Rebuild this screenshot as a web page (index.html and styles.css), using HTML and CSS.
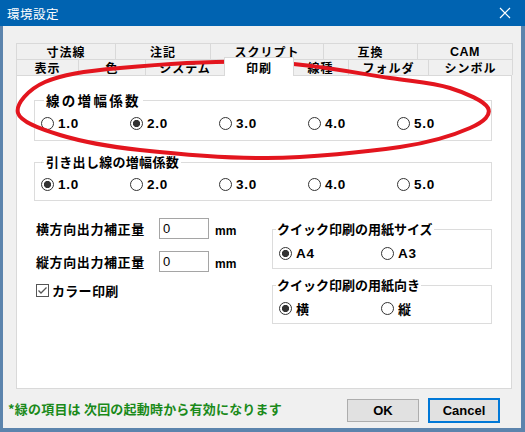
FILE: index.html
```html
<!DOCTYPE html>
<html lang="ja">
<head>
<meta charset="utf-8">
<title>環境設定</title>
<link rel="stylesheet" href="styles.css">
</head>
<body>
<div class="window">
  <div class="titlebar">
    <span class="title">環境設定</span>
    <svg class="close" width="12" height="12" viewBox="0 0 12 12"><path d="M1 1L11 11M11 1L1 11" stroke="#fff" stroke-width="1.2" fill="none"/></svg>
  </div>
  <div class="body">
    <div class="tabs">
      <div class="tabrow row1">
        <div class="tab">寸法線</div>
        <div class="tab">注記</div>
        <div class="tab">スクリプト</div>
        <div class="tab">互換</div>
        <div class="tab latin">CAM</div>
      </div>
      <div class="tabrow row2">
        <div class="tab">表示</div>
        <div class="tab">色</div>
        <div class="tab">システム</div>
        <div class="tab selected">印刷</div>
        <div class="tab">線種</div>
        <div class="tab">フォルダ</div>
        <div class="tab">シンボル</div>
      </div>
      <div class="panel">
        <div class="group wide g1">
          <div class="legend spaced">線の増幅係数</div>
          <div class="radios five">
            <label class="opt"><span class="radio"></span><span class="num">1.0</span></label>
            <label class="opt"><span class="radio on"></span><span class="num">2.0</span></label>
            <label class="opt"><span class="radio"></span><span class="num">3.0</span></label>
            <label class="opt"><span class="radio"></span><span class="num">4.0</span></label>
            <label class="opt"><span class="radio"></span><span class="num">5.0</span></label>
          </div>
        </div>
        <div class="group wide g2">
          <div class="legend">引き出し線の増幅係数</div>
          <div class="radios five">
            <label class="opt"><span class="radio on"></span><span class="num">1.0</span></label>
            <label class="opt"><span class="radio"></span><span class="num">2.0</span></label>
            <label class="opt"><span class="radio"></span><span class="num">3.0</span></label>
            <label class="opt"><span class="radio"></span><span class="num">4.0</span></label>
            <label class="opt"><span class="radio"></span><span class="num">5.0</span></label>
          </div>
        </div>
        <div class="lower">
          <div class="leftcol">
            <div class="field">
              <span class="flabel">横方向出力補正量</span>
              <span class="input">0</span>
              <span class="unit">mm</span>
            </div>
            <div class="field">
              <span class="flabel">縦方向出力補正量</span>
              <span class="input">0</span>
              <span class="unit">mm</span>
            </div>
            <label class="check">
              <svg class="box" width="13" height="13" viewBox="0 0 13 13"><rect x="0.5" y="0.5" width="12" height="12" fill="#fff" stroke="#555"/><path d="M2.5 6.5L5 9L10.5 3.5" stroke="#555" stroke-width="1.3" fill="none"/></svg>
              <span>カラー印刷</span>
            </label>
          </div>
          <div class="rightcol">
            <div class="group small ga">
              <div class="legend">クイック印刷の用紙サイズ</div>
              <div class="radios two">
                <label class="opt"><span class="radio on"></span><span class="num">A4</span></label>
                <label class="opt"><span class="radio"></span><span class="num">A3</span></label>
              </div>
            </div>
            <div class="group small gb">
              <div class="legend">クイック印刷の用紙向き</div>
              <div class="radios two">
                <label class="opt"><span class="radio on"></span><span>横</span></label>
                <label class="opt"><span class="radio"></span><span>縦</span></label>
              </div>
            </div>
          </div>
        </div>
      </div>
    </div>
    <div class="footer">
      <span class="note">*緑の項目は 次回の起動時から有効になります</span>
      <span class="btn ok">OK</span>
      <span class="btn cancel">Cancel</span>
    </div>
  </div>
  <svg class="annot" width="525" height="432" viewBox="0 0 525 432">
    <path d="M18 113 C15.5 104.2 28 89.5 45 82 C62 74.5 83 71.3 120 68 C157 64.7 222 60.3 267 62 C312 63.7 359.5 73.7 390 78 C420.5 82.3 433.7 83 450 88 C466.3 93 484.7 101.3 488 108 C491.3 114.7 484.7 121.5 470 128 C455.3 134.5 433.8 142 400 147 C366.2 152 310.3 157.5 267 158 C223.7 158.5 174.5 153.8 140 150 C105.5 146.2 80.3 141.2 60 135 C39.7 128.8 20.5 121.8 18 113 Z" fill="none" stroke="#e3151e" stroke-width="4"/>
  </svg>
</div>
</body>
</html>
```

FILE: styles.css
```css
* { box-sizing: border-box; }
html, body { margin: 0; padding: 0; }
body {
  width: 525px;
  height: 432px;
  overflow: hidden;
  font-family: "Noto Sans CJK JP", "Noto Sans", sans-serif;
  font-size: 13px;
  font-weight: 700;
  color: #000;
}
.window {
  position: relative;
  width: 525px;
  height: 432px;
  background: #f0f0f0;
  display: flex;
  flex-direction: column;
}
.titlebar {
  height: 26px;
  background: #0063b1;
  color: #fff;
  display: flex;
  align-items: center;
  justify-content: space-between;
  padding: 0 14px 0 7px;
  flex: none;
}
.title { font-size: 12.5px; font-weight: 400; letter-spacing: 0.5px; }
.body {
  flex: 1;
  display: flex;
  flex-direction: column;
  border-left: 3px solid #5c84ad;
  border-right: 4px solid #5c84ad;
  border-bottom: 4px solid #5c84ad;
}
.tabs { margin: 17px 9px 0 13px; }
.tabrow {
  display: grid;
  border-left: 1px solid #d9d9d9;
}
.row1 { height: 16px; grid-template-columns: 99px 95px 113px 94px 95px; }
.row2 { height: 16px; grid-template-columns: 62px 67px 79px 68px 56px 80px 84px; }
.tab {
  border-top: 1px solid #d9d9d9;
  border-right: 1px solid #d9d9d9;
  display: flex;
  align-items: center;
  justify-content: center;
  font-size: 12px;
  line-height: 14px;
  white-space: nowrap;
  letter-spacing: 1px;
  overflow: hidden;
}
.tab.latin { font-family: "Liberation Sans", sans-serif; font-size: 12.5px; letter-spacing: 0.5px; }
.tab.selected {
  position: relative;
  z-index: 1;
  background: #fff;
  margin: -2px -1px -1px -1px;
  border-left: 1px solid #d9d9d9;
  padding-top: 2px;
  padding-bottom: 1px;
}
.panel {
  height: 314px;
  background: #fff;
  border: 1px solid #d9d9d9;
  padding: 24px 19px 0 17px;
}
.group {
  border: 1px solid #dcdcdc;
  padding: 0 0 0 6px;
}
.legend {
  width: max-content;
  margin: -9px 0 0 3px;
  padding: 0 2px;
  background: #fff;
  line-height: 16px;
  height: 16px;
  letter-spacing: 0.3px;
}
.legend.spaced { letter-spacing: 2.3px; font-size: 13.5px; }
.g1 { height: 41px; }
.g2 { height: 39px; margin-top: 21px; }
.radios { display: flex; margin-top: 7px; }
.g2 .radios { margin-top: 6px; }
.opt { display: flex; align-items: center; height: 16px; }
.five .opt { width: 89px; }
.two .opt { width: 102px; }
.radio {
  width: 13px;
  height: 13px;
  border-radius: 50%;
  border: 1px solid #333;
  background: #fff;
  margin-right: 4px;
  flex: none;
}
.radio.on { background: radial-gradient(circle, #333 0, #333 3.3px, #fff 3.9px); }
.num {
  font-family: "Liberation Sans", sans-serif;
  font-size: 13.5px;
  letter-spacing: 0.8px;
}
.lower { display: flex; margin-top: 17px; }
.leftcol { width: 238px; padding-left: 2px; }
.field { display: flex; align-items: center; height: 21px; margin-bottom: 12px; }
.flabel { width: 123px; letter-spacing: 0.6px; }
.input {
  width: 50px;
  height: 21px;
  border: 1px solid #a5a5a5;
  background: #fff;
  font-family: "Liberation Sans", sans-serif;
  font-weight: 400;
  font-size: 13px;
  line-height: 19px;
  padding-left: 3px;
}
.unit {
  align-self: flex-end;
  margin-left: 6px;
  font-family: "Liberation Sans", sans-serif;
  font-size: 12px;
  line-height: 14px;
  margin-bottom: 1px;
}
.check { display: flex; align-items: center; gap: 3px; margin-top: -1px; height: 14px; letter-spacing: 0.3px; }
.box { flex: none; }
.rightcol { width: 220px; margin-top: 11px; }
.small { height: 40px; }
.ga .radios { margin-top: 8px; }
.gb { margin-top: 16px; height: 39px; }
.gb .radios { margin-top: 7px; }
.small .legend { margin-left: -3px; padding: 0 1px; letter-spacing: 0; }
.footer {
  flex: 1;
  display: flex;
  align-items: center;
  padding: 0 21px 0 5px;
}
.note { color: #1a8a1a; flex: 1; letter-spacing: 0.2px; }
.btn {
  width: 72px;
  height: 23px;
  border: 1px solid #adadad;
  background: #e1e1e1;
  display: flex;
  align-items: center;
  justify-content: center;
  font-family: "Liberation Sans", sans-serif;
  font-size: 13px;
  margin-top: 3px;
}
.btn.cancel {
  width: 72px;
  height: 25px;
  border: 2px solid #0078d7;
  margin-left: 9px;
}
.annot { position: absolute; left: 0; top: 0; pointer-events: none; }
```
